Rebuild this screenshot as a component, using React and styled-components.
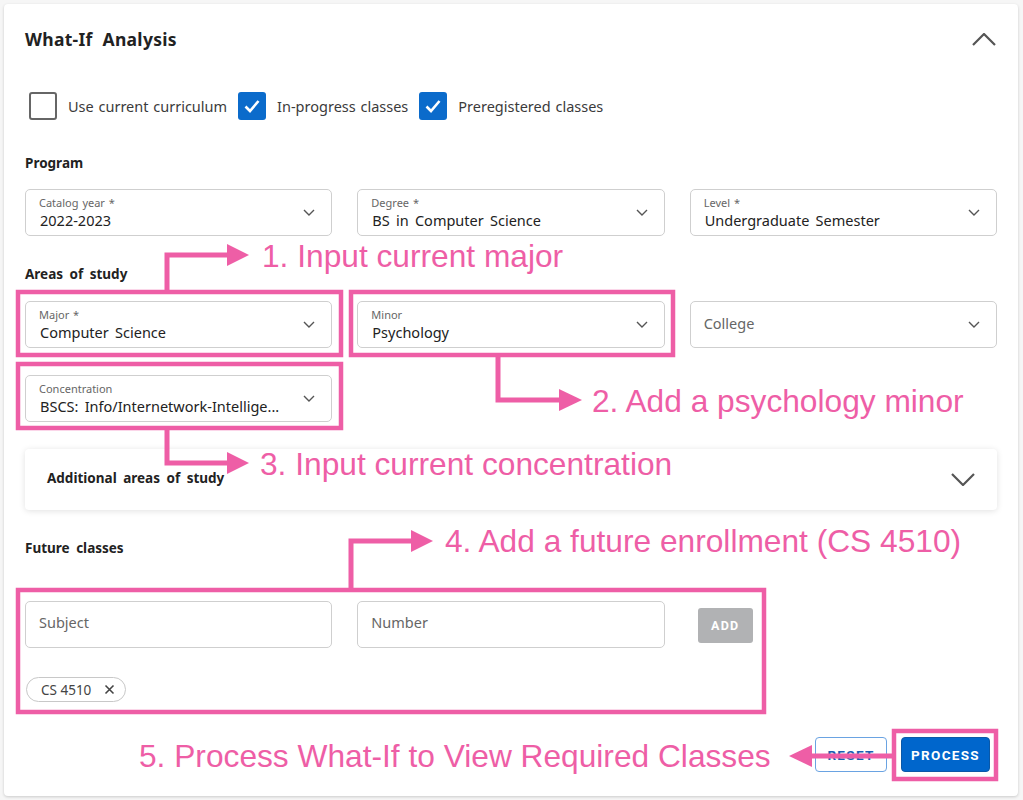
import React from 'react'
import styled, { createGlobalStyle } from 'styled-components'

const PINK = '#ee5ea6'

const GlobalStyle = createGlobalStyle`
    * { box-sizing: border-box; }
    body {
        margin: 0;
        background: #f6f6f6;
        font-family: "Noto Sans", "Open Sans", sans-serif;
        color: #222;
    }
`

function Chevron({ up, size = 'small' }) {
    const w = size === 'small' ? 12 : 24
    const h = size === 'small' ? 7 : 13
    return (
        <svg width={w} height={h} viewBox={`0 0 ${w} ${h}`}>
            <polyline
                points={up ? `1,${h - 1} ${w / 2},1 ${w - 1},${h - 1}` : `1,1 ${w / 2},${h - 1} ${w - 1},1`}
                fill="none"
                stroke="#555"
                strokeWidth={size === 'small' ? 1.4 : 2.2}
            />
        </svg>
    )
}

function Check({ checked, label }) {
    return (
        <CheckItem>
            <Box checked={checked}>
                {checked && (
                    <svg width="20" height="20" viewBox="0 0 20 20">
                        <polyline points="3.5,10.5 8,15 16.5,5" fill="none" stroke="#fff" strokeWidth="2.6" />
                    </svg>
                )}
            </Box>
            <span>{label}</span>
        </CheckItem>
    )
}

function Select({ label, value, placeholder }) {
    return (
        <Field>
            <FieldText>
                {label && <FieldLabel>{label}</FieldLabel>}
                {value && <FieldValue>{value}</FieldValue>}
                {placeholder && <Placeholder>{placeholder}</Placeholder>}
            </FieldText>
            <Chevron />
        </Field>
    )
}

function App() {
    return (
        <Page>
            <GlobalStyle />
            <Card>
                <Header>
                    <Title>What-If Analysis</Title>
                    <Chevron up size="large" />
                </Header>

                <CheckRow>
                    <Check label="Use current curriculum" />
                    <Check checked label="In-progress classes" />
                    <Check checked label="Preregistered classes" />
                </CheckRow>

                <SectionLabel top={33}>Program</SectionLabel>
                <Grid top={16}>
                    <Select label="Catalog year *" value="2022-2023" />
                    <Select label="Degree *" value="BS in Computer Science" />
                    <Select label="Level *" value="Undergraduate Semester" />
                </Grid>

                <SectionLabel top={28}>Areas of study</SectionLabel>
                <Grid top={17}>
                    <Select label="Major *" value="Computer Science" />
                    <Select label="Minor" value="Psychology" />
                    <Select placeholder="College" />
                </Grid>
                <Grid top={27}>
                    <Select label="Concentration" value="BSCS: Info/Internetwork-Intellige..." />
                </Grid>

                <Accordion>
                    <AccordionTitle>Additional areas of study</AccordionTitle>
                    <Chevron size="large" />
                </Accordion>

                <SectionLabel top={28}>Future classes</SectionLabel>
                <Grid top={43}>
                    <TextInput>Subject</TextInput>
                    <TextInput>Number</TextInput>
                    <div>
                        <AddButton>ADD</AddButton>
                    </div>
                </Grid>
                <ChipRow>
                    <Chip>
                        CS 4510
                        <svg width="11" height="11" viewBox="0 0 11 11">
                            <path d="M1.5 1.5 L9.5 9.5 M9.5 1.5 L1.5 9.5" stroke="#444" strokeWidth="1.6" />
                        </svg>
                    </Chip>
                </ChipRow>

                <Actions>
                    <OutlineButton>RESET</OutlineButton>
                    <PrimaryButton>PROCESS</PrimaryButton>
                </Actions>
            </Card>

            <Overlay width="1023" height="800" viewBox="0 0 1023 800">
                <g fill="none" stroke={PINK} strokeWidth="4.5">
                    <rect x="18" y="292" width="323" height="63" />
                    <rect x="351" y="292" width="322" height="63" />
                    <rect x="18" y="364" width="323" height="64" />
                    <rect x="18" y="590" width="746" height="122" />
                    <rect x="894" y="731" width="102" height="48" />
                </g>
                <g fill="none" stroke={PINK} strokeWidth="5">
                    <polyline points="167,292 167,255 229,255" />
                    <polyline points="498,355 498,400 561,400" />
                    <polyline points="167,428 167,463 229,463" />
                    <polyline points="351,590 351,541 413,541" />
                    <polyline points="892,756 810,756" />
                </g>
                <g fill={PINK}>
                    <polygon points="227,244 249,255 227,266" />
                    <polygon points="559,389 582,400 559,411" />
                    <polygon points="227,452 249,463 227,474" />
                    <polygon points="411,530 433,541 411,552" />
                    <polygon points="812,745 789,756 812,767" />
                </g>
            </Overlay>

            <Note x={262} y={256}>1. Input current major</Note>
            <Note x={592} y={401}>2. Add a psychology minor</Note>
            <Note x={260} y={464}>3. Input current concentration</Note>
            <Note x={445} y={541}>4. Add a future enrollment (CS 4510)</Note>
            <Note x={139} y={756}>5. Process What-If to View Required Classes</Note>
        </Page>
    )
}

export default App

const Page = styled.div`
    position: relative;
    width: 1023px;
    height: 800px;
    padding: 4px 5px 4px 4px;
`
const Card = styled.section`
    background: #fff;
    height: 792px;
    border-radius: 4px;
    box-shadow: 0 1px 3px rgba(0, 0, 0, 0.18);
    padding: 0 21px;
`
const Header = styled.header`
    height: 70px;
    display: flex;
    align-items: center;
    justify-content: space-between;
    padding-right: 1px;
`
const Title = styled.h1`
    margin: 0;
    font-size: 17.5px;
    font-weight: 700;
    color: #222;
    letter-spacing: 0.3px;
    word-spacing: 5px;
`
const CheckRow = styled.div`
    margin-top: 18px;
    height: 28px;
    display: flex;
    align-items: center;
    gap: 11px;
    padding-left: 4px;
`
const CheckItem = styled.label`
    display: flex;
    align-items: center;
    gap: 11px;
    font-size: 14.5px;
    color: #3b3b3b;
    word-spacing: 1px;
`
const Box = styled.span`
    width: 28px;
    height: 28px;
    border-radius: 3px;
    display: flex;
    align-items: center;
    justify-content: center;
    border: ${p => (p.checked ? 'none' : '2.5px solid #666')};
    background: ${p => (p.checked ? '#0b6bcb' : '#fff')};
`
const SectionLabel = styled.h3`
    margin: ${p => p.top}px 0 0;
    line-height: 20px;
    font-size: 13.5px;
    font-weight: 700;
    color: #222;
    word-spacing: 3px;
`
const Grid = styled.div`
    margin-top: ${p => p.top}px;
    display: grid;
    grid-template-columns: repeat(3, 1fr);
    gap: 25px;
`
const Field = styled.div`
    height: 47px;
    border: 1px solid #cfcfcf;
    border-radius: 5px;
    display: flex;
    align-items: center;
    justify-content: space-between;
    padding: 0 16px 0 13px;
`
const FieldText = styled.div`
    display: flex;
    flex-direction: column;
    min-width: 0;
    padding-top: 3px;
`
const FieldLabel = styled.span`
    font-size: 11px;
    line-height: 14px;
    color: #666;
    margin-top: -3px;
    word-spacing: 1px;
`
const FieldValue = styled.span`
    font-size: 14.5px;
    line-height: 20px;
    color: #222;
    padding-left: 1px;
    white-space: nowrap;
    word-spacing: 2.5px;
`
const Placeholder = styled.span`
    font-size: 14.5px;
    color: #666;
    margin-top: -7px;
`
const Accordion = styled.div`
    margin-top: 27px;
    height: 61px;
    border-radius: 4px;
    background: #fff;
    box-shadow: 0 1px 6px rgba(0, 0, 0, 0.12);
    display: flex;
    align-items: center;
    justify-content: space-between;
    padding: 0 22px;
`
const AccordionTitle = styled.span`
    font-size: 13.5px;
    font-weight: 700;
    color: #222;
    margin-top: -4px;
    word-spacing: 3px;
`
const TextInput = styled.div`
    height: 47px;
    border: 1px solid #cfcfcf;
    border-radius: 5px;
    padding: 0 13px;
    display: flex;
    align-items: center;
    font-size: 14.5px;
    color: #666;
    padding-bottom: 5px;
`
const AddButton = styled.button`
    margin: 7px 0 0 8px;
    width: 55px;
    height: 35px;
    border: none;
    border-radius: 3px;
    background: #b1b2b4;
    color: #fff;
    font-family: Roboto, "Liberation Sans", sans-serif;
    font-weight: 700;
    font-size: 12.5px;
    letter-spacing: 1.2px;
`
const ChipRow = styled.div`
    margin-top: 29px;
    display: flex;
`
const Chip = styled.span`
    height: 25px;
    display: inline-flex;
    align-items: center;
    gap: 13px;
    padding: 0 10px 0 14px;
    margin-left: 1px;
    border: 1px solid #c8c8c8;
    border-radius: 13px;
    font-size: 13.5px;
    color: #444;
`
const Actions = styled.div`
    margin-top: 35px;
    display: flex;
    justify-content: flex-end;
    gap: 14px;
    padding-right: 7px;
`
const ButtonBase = styled.button`
    height: 35px;
    border-radius: 4px;
    font-family: Roboto, "Liberation Sans", sans-serif;
    font-weight: 700;
    font-size: 13.5px;
    letter-spacing: 1.3px;
`
const OutlineButton = styled(ButtonBase)`
    width: 72px;
    background: #fff;
    color: #1b5fb0;
    border: 1.5px solid #6aa3e2;
`
const PrimaryButton = styled(ButtonBase)`
    width: 89px;
    background: #0066cc;
    color: #fff;
    border: 1px solid #0a58a8;
`
const Overlay = styled.svg`
    position: absolute;
    left: 0;
    top: 0;
    pointer-events: none;
`
const Note = styled.div`
    position: absolute;
    left: ${p => p.x}px;
    top: ${p => p.y - 20}px;
    line-height: 40px;
    font-family: "Liberation Sans", Arial, sans-serif;
    font-size: 31.7px;
    color: ${PINK};
    white-space: nowrap;
    pointer-events: none;
`
